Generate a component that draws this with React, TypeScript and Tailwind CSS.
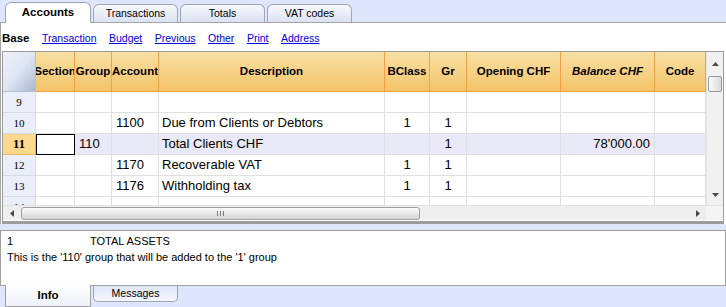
import React from 'react';

const cols = 'grid-cols-[33px_39px_37px_47px_226px_45px_37px_94px_94px_51px]';

type Row = {
  n: number;
  group?: string;
  account?: string;
  desc?: string;
  bclass?: string;
  gr?: string;
  balance?: string;
};

const rows: Row[] = [
  { n: 9 },
  { n: 10, account: '1100', desc: 'Due from Clients or Debtors', bclass: '1', gr: '1' },
  { n: 11, group: '110', desc: 'Total Clients CHF', gr: '1', balance: "78'000.00" },
  { n: 12, account: '1170', desc: 'Recoverable VAT', bclass: '1', gr: '1' },
  { n: 13, account: '1176', desc: 'Withholding tax', bclass: '1', gr: '1' },
  { n: 14 },
];

const headers: { label: string; italic?: boolean }[] = [
  { label: 'Section' },
  { label: 'Group' },
  { label: 'Account' },
  { label: 'Description' },
  { label: 'BClass' },
  { label: 'Gr' },
  { label: 'Opening CHF' },
  { label: 'Balance CHF', italic: true },
  { label: 'Code' },
];

const Arrow: React.FC<{ dir: 'up' | 'down' | 'left' | 'right' }> = ({ dir }) => {
  const pts = {
    up: '0,4 7,4 3.5,0',
    down: '0,0 7,0 3.5,4',
    left: '4,0 4,7 0,3.5',
    right: '0,0 0,7 4,3.5',
  }[dir];
  const vertical = dir === 'up' || dir === 'down';
  return (
    <svg width={vertical ? 7 : 4} height={vertical ? 4 : 7} viewBox={vertical ? '0 0 7 4' : '0 0 4 7'}>
      <polygon points={pts} fill="#4a4a4a" />
    </svg>
  );
};

const App: React.FC = () => {
  const links = ['Transaction', 'Budget', 'Previous', 'Other', 'Print', 'Address'];

  return (
    <div className="w-[726px] h-[307px] bg-[#dfe6fb] flex flex-col overflow-hidden font-['Liberation_Sans',Arial,sans-serif] text-black">
      {/* top tabs */}
      <div className="h-[22px] flex items-end pl-[5px] gap-[2px]">
        <div className="relative z-10 -mb-px w-[86px] h-[21px] bg-white border border-b-0 border-[#9ea6b6] rounded-t-[6px] flex items-center justify-center text-[11.5px] font-bold">
          Accounts
        </div>
        {['Transactions', 'Totals', 'VAT codes'].map(t => (
          <div
            key={t}
            className="w-[85px] h-[18px] bg-gradient-to-b from-[#f8f9fd] to-[#dce2f4] border border-b-0 border-[#9ea6b6] rounded-t-[6px] flex items-center justify-center text-[10.5px]"
          >
            {t}
          </div>
        ))}
      </div>

      {/* main panel */}
      <div className="h-[202px] bg-white border-t border-l border-[#a5a5a5] flex flex-col">
        <div className="h-[28px] flex items-center pt-[3px] pl-[1px] gap-[12.5px] text-[10.5px]">
          <span className="font-bold text-[11.5px]">Base</span>
          {links.map(l => (
            <span key={l} className="text-[#0000dd] underline">
              {l}
            </span>
          ))}
        </div>

        {/* grid box */}
        <div className="ml-[1px] w-[722px] h-[173px] border border-b-[3px] border-[#9c9c9c] flex flex-col">
          <div className="h-[153px] flex">
            <div className={`w-[703px] grid ${cols} content-start overflow-hidden`}>
              {/* corner */}
              <div className="h-[40px] bg-gradient-to-br from-[#edf1fa] via-[#dfe6f3] to-[#a8b7d1] border-r border-b border-[#b4bfd2]" />
              {headers.map(h => (
                <div
                  key={h.label}
                  className={`h-[40px] bg-gradient-to-b from-[#f8e0a3] to-[#f4c468] border-r border-b border-[#f3a046] flex items-center justify-center overflow-hidden whitespace-nowrap text-[11.5px] font-bold ${h.italic ? 'italic font-semibold' : ''}`}
                >
                  {h.label}
                </div>
              ))}
              {rows.map(r => {
                const sel = r.n === 11;
                const cell = `h-[21px] border-r border-b border-[#e0e0e0] flex items-center whitespace-nowrap overflow-hidden text-[13px] ${sel ? 'bg-[#e8e8f6]' : ''}`;
                return (
                  <React.Fragment key={r.n}>
                    <div
                      className={`h-[21px] border-r border-b flex items-center justify-center font-['Liberation_Serif',serif] ${
                        sel
                          ? 'bg-[#fcd98d] border-[#f0b560] font-bold text-[12.5px]'
                          : 'bg-[#e9eef8] border-[#d3dae6] text-[11px]'
                      }`}
                    >
                      {r.n}
                    </div>
                    <div className={`${cell} ${sel ? '!bg-white outline outline-1 -outline-offset-1 outline-black' : ''}`} />
                    <div className={`${cell} pl-[4px]`}>{r.group}</div>
                    <div className={`${cell} pl-[4px]`}>{r.account}</div>
                    <div className={`${cell} pl-[3px]`}>{r.desc}</div>
                    <div className={`${cell} justify-center`}>{r.bclass}</div>
                    <div className={`${cell} justify-center`}>{r.gr}</div>
                    <div className={cell} />
                    <div className={`${cell} justify-end pr-[4px]`}>{r.balance}</div>
                    <div className={cell} />
                  </React.Fragment>
                );
              })}
            </div>
            {/* vertical scrollbar */}
            <div className="w-[17px] bg-[#f1f1f1] border-l border-[#e4e4e4] flex flex-col items-center">
              <div className="h-[24px] flex items-center justify-center">
                <Arrow dir="up" />
              </div>
              <div className="w-[14px] h-[16px] rounded-[2px] border border-[#9a9a9a] bg-gradient-to-r from-[#fbfbfb] to-[#d9d9d9]" />
              <div className="flex-1" />
              <div className="h-[20px] flex items-center justify-center">
                <Arrow dir="down" />
              </div>
            </div>
          </div>
          {/* horizontal scrollbar */}
          <div className="h-[15px] flex bg-[#eeeeee] border-t border-[#e2e2e2]">
            <div className="w-[703px] flex items-center">
              <div className="w-[18px] flex items-center justify-center">
                <Arrow dir="left" />
              </div>
              <div className="w-[399px] h-[13px] rounded-[3px] border border-[#a0a0a0] bg-gradient-to-b from-[#fcfcfc] to-[#d3d3d3] flex items-center justify-center gap-[2px]">
                <span className="w-px h-[5px] bg-[#7a7a7a]" />
                <span className="w-px h-[5px] bg-[#7a7a7a]" />
                <span className="w-px h-[5px] bg-[#7a7a7a]" />
              </div>
              <div className="flex-1" />
              <div className="w-[16px] flex items-center justify-center">
                <Arrow dir="right" />
              </div>
            </div>
            <div className="w-[17px] bg-[#f4f4f4]" />
          </div>
        </div>
      </div>

      <div className="h-[6px]" />

      {/* info panel */}
      <div className="h-[56px] bg-white border border-[#a0a0a0] pt-[2px] pl-[6px] text-[11px] leading-[16px]">
        <div className="flex">
          <span className="w-[83px]">1</span>
          <span>TOTAL ASSETS</span>
        </div>
        <div>This is the '110' group that will be added to the '1' group</div>
      </div>

      {/* bottom tabs */}
      <div className="h-[21px] flex items-start pl-[5px] gap-[2px]">
        <div className="relative z-10 -mt-px w-[86px] h-[22px] bg-gradient-to-b from-white to-[#eef1fa] border border-t-0 border-[#a0a0a0] flex items-center justify-center text-[11.5px] font-bold">
          Info
        </div>
        <div className="w-[85px] h-[16px] bg-gradient-to-b from-[#dfe5f7] to-[#f5f7fc] border border-t-0 border-[#9ea6b6] rounded-b-[5px] flex items-center justify-center text-[10.5px]">
          Messages
        </div>
      </div>
    </div>
  );
};

export default App;
